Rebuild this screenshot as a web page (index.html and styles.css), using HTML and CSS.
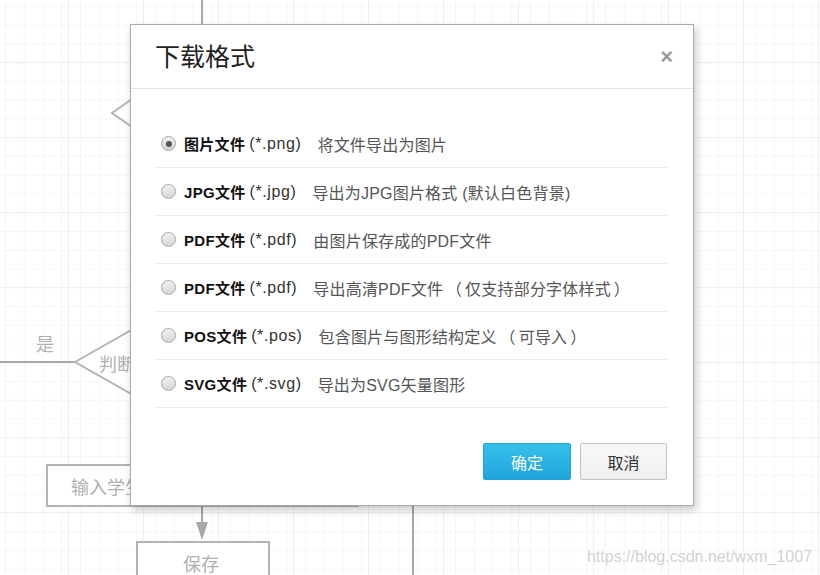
FILE: index.html
```html
<!DOCTYPE html>
<html lang="zh-CN">
<head>
  <meta charset="UTF-8" />
  <title>下载格式</title>
  <link rel="stylesheet" href="styles.css">
</head>
<body>
  <div class="canvas">
    <svg class="chart" width="820" height="575" viewBox="0 0 820 575">
      <line x1="202" y1="0" x2="202" y2="24" class="edge" />
      <polygon points="112,113 135,97 135,129" class="shape" />
      <line x1="0" y1="362" x2="75" y2="362" class="edge" />
      <text x="36" y="351" class="label">是</text>
      <polygon points="75,362 135,328 135,396" class="shape" />
      <text x="99" y="371" class="label">判断</text>
      <rect x="47" y="465" width="311" height="41" class="shape" />
      <text x="71" y="494" class="label">输入学生信息</text>
      <line x1="202" y1="506" x2="202" y2="524" class="edge" />
      <polygon points="196,522 208,522 202,540" class="arrow" />
      <rect x="137" y="542" width="132" height="40" class="shape" />
      <text x="183" y="571" class="label">保存</text>
      <line x1="413" y1="505" x2="413" y2="575" class="edge" />
    </svg>
    <div class="watermark">https://blog.csdn.net/wxm_1007</div>

    <div class="modal">
      <div class="modal-header">
        <h2 class="modal-title">下载格式</h2>
        <span class="close">×</span>
      </div>
      <div class="modal-body">
        <label class="option">
          <span class="radio checked"></span>
          <span class="name">图片文件</span> <span class="ext">(*.png)</span>
          <span class="desc">将文件导出为图片</span>
        </label>
        <label class="option">
          <span class="radio"></span>
          <span class="name">JPG文件</span> <span class="ext">(*.jpg)</span>
          <span class="desc">导出为JPG图片格式 (默认白色背景)</span>
        </label>
        <label class="option">
          <span class="radio"></span>
          <span class="name">PDF文件</span> <span class="ext">(*.pdf)</span>
          <span class="desc">由图片保存成的PDF文件</span>
        </label>
        <label class="option">
          <span class="radio"></span>
          <span class="name">PDF文件</span> <span class="ext">(*.pdf)</span>
          <span class="desc">导出高清PDF文件<span class="paren">（</span>仅支持部分字体样式<span class="paren">）</span></span>
        </label>
        <label class="option">
          <span class="radio"></span>
          <span class="name">POS文件</span> <span class="ext">(*.pos)</span>
          <span class="desc">包含图片与图形结构定义<span class="paren">（</span>可导入<span class="paren">）</span></span>
        </label>
        <label class="option">
          <span class="radio"></span>
          <span class="name">SVG文件</span> <span class="ext">(*.svg)</span>
          <span class="desc">导出为SVG矢量图形</span>
        </label>
      </div>
      <div class="modal-footer">
        <button class="btn btn-primary">确定</button>
        <button class="btn btn-default">取消</button>
      </div>
    </div>
  </div>
</body>
</html>
```

FILE: styles.css
```css
* {
  margin: 0;
  padding: 0;
  box-sizing: border-box;
}

body {
  font-family: "Liberation Sans", "Noto Sans CJK SC", sans-serif;
  background: #fff;
  overflow: hidden;
}

.canvas {
  position: relative;
  width: 820px;
  height: 575px;
  background-color: #fff;
  background-image:
    linear-gradient(to right, #efefef 1px, transparent 1px),
    linear-gradient(to bottom, #efefef 1px, transparent 1px),
    linear-gradient(to right, #f6f6f6 1px, transparent 1px),
    linear-gradient(to bottom, #f6f6f6 1px, transparent 1px);
  background-size: 75px 75px, 75px 75px, 18.75px 18.75px, 18.75px 18.75px;
  background-position: 668px 62px, 668px 62px, 5px 6px, 5px 6px;
  overflow: hidden;
}

.chart {
  position: absolute;
  left: 0;
  top: 0;
}

.chart .edge {
  stroke: #a8a8a8;
  stroke-width: 2;
}

.chart .shape {
  fill: #fff;
  stroke: #b4b4b4;
  stroke-width: 2;
}

.chart .arrow {
  fill: #a8a8a8;
}

.chart .label {
  font-family: "Liberation Sans", "Noto Sans CJK SC", sans-serif;
  font-size: 18px;
  fill: #b0b0b0;
}

.watermark {
  position: absolute;
  right: 8px;
  bottom: 9px;
  font-size: 16px;
  color: #d2d2d2;
  text-shadow: 0 0 1px #fff;
}

/* Dialog */
.modal {
  position: absolute;
  left: 130px;
  top: 24px;
  width: 564px;
  height: 482px;
  background: #fff;
  border: 1px solid #a9a9a9;
  box-shadow: 2px 4px 8px rgba(0, 0, 0, 0.22);
  display: flex;
  flex-direction: column;
}

.modal-header {
  height: 64px;
  border-bottom: 1px solid #e2e2e2;
  padding: 0 20px 0 24px;
  display: flex;
  align-items: center;
  justify-content: space-between;
}

.modal-title {
  font-size: 25px;
  font-weight: 400;
  color: #222;
  margin-top: -3px;
}

.close {
  font-size: 22px;
  font-weight: 700;
  color: #9a9a9a;
  cursor: pointer;
  line-height: 1;
}

.modal-body {
  padding: 31px 25px 0 24px;
}

.option {
  height: 48px;
  border-bottom: 1px solid #ececec;
  display: flex;
  align-items: center;
  padding-left: 6px;
  font-size: 15px;
  white-space: pre;
  cursor: pointer;
}

.radio {
  width: 15px;
  height: 15px;
  border-radius: 50%;
  border: 1px solid #a5a5a5;
  background: linear-gradient(#f2f2f2, #d4d4d4);
  margin-right: 8px;
  position: relative;
  flex-shrink: 0;
}

.radio.checked::after {
  content: '';
  position: absolute;
  left: 3.5px;
  top: 3.5px;
  width: 6px;
  height: 6px;
  border-radius: 50%;
  background: #555;
}

.name {
  font-weight: 700;
  color: #111;
  letter-spacing: 0.3px;
}

.ext {
  font-size: 16px;
  color: #333;
  margin-left: 4px;
  letter-spacing: 0.6px;
}

.desc {
  font-size: 16px;
  color: #555;
  margin-left: 16px;
  letter-spacing: 0.2px;
}

.paren {
  display: inline-block;
  width: 22px;
  text-align: center;
}

.modal-footer {
  margin-top: auto;
  padding: 0 26px 25px 0;
  display: flex;
  justify-content: flex-end;
  gap: 9px;
}

.btn {
  height: 37px;
  font-family: inherit;
  font-size: 16px;
  border-radius: 2px;
  cursor: pointer;
}

.btn-primary {
  width: 88px;
  border: 1px solid #20a3d8;
  background: linear-gradient(#35c1eb, #20a4dc);
  color: #fff;
}

.btn-default {
  width: 87px;
  border: 1px solid #c2c2c2;
  background: linear-gradient(#f8f8f8, #efefef);
  color: #333;
}
```
